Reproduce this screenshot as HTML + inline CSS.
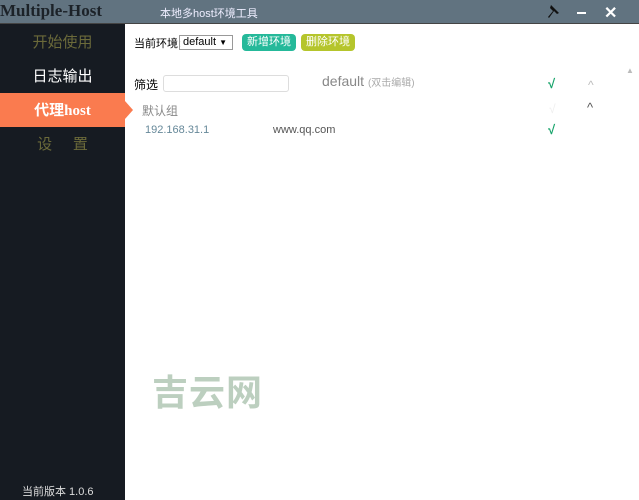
<!DOCTYPE html>
<html><head><meta charset="utf-8"><style>
*{margin:0;padding:0;box-sizing:border-box}
body{width:639px;height:500px;overflow:hidden;background:#fff;font-family:"Liberation Sans","Noto Sans CJK SC",sans-serif;position:relative}
.tb{position:absolute;left:0;top:0;width:639px;height:24px;background:#617380;border-bottom:1px solid #444}
.logo{position:absolute;left:0;top:1px;font-family:"Liberation Serif",serif;font-weight:bold;font-size:17px;color:#1c2228}
.title{position:absolute;left:160px;top:5px;font-size:11px;color:#eef}
.side{position:absolute;left:0;top:24px;width:125px;height:476px;background:#161b22}
.it{position:absolute;left:0;width:125px;text-align:center;font-size:15px}
.act{position:absolute;left:0;top:69px;width:125px;height:34px;background:#fa7b4f}
.arr{position:absolute;left:125px;top:101px;width:0;height:0;border-top:9px solid transparent;border-bottom:9px solid transparent;border-left:8px solid #fa7b4f}
.t{position:absolute;font-size:12px;white-space:nowrap}
.btn{position:absolute;top:34px;height:17px;border-radius:4px;color:#fff;font-size:11px;line-height:17px;padding:0 5px}
</style></head><body>
<div class="tb"><div class="logo">Multiple-Host</div><div class="title">本地多host环境工具</div>
<svg style="position:absolute;left:545px;top:3px" width="18" height="18" viewBox="0 0 18 18"><path d="M6 2l8 8-2 1-3-3-5 7-1-1 5-6-3-3z" fill="#111"/></svg>
<div style="position:absolute;left:577px;top:12px;width:9px;height:2px;background:#fff"></div>
<div style="position:absolute;left:604px;top:3px;color:#fff;font-size:16px;font-weight:bold">✕</div>
</div>
<div class="side">
<div class="it" style="top:7px;color:#6b6a3a">开始使用</div>
<div class="it" style="top:41px;color:#fff">日志输出</div>
<div class="act"></div>
<div class="it" style="top:75px;color:#fff;font-weight:bold">代理<span style="font-family:'Liberation Serif',serif">host</span></div>
<div class="it" style="top:109px;color:#6b6a3a">设&nbsp;&nbsp;&nbsp;&nbsp;&nbsp;置</div>
<div class="t" style="left:22px;top:459px;color:#ddd;font-size:11px">当前版本 1.0.6</div>
</div>
<div class="arr"></div>
<div class="t" style="left:134px;top:35px;color:#000;font-size:11px">当前环境:</div>
<div style="position:absolute;left:179px;top:35px;width:54px;height:15px;border:1px solid #999;font-size:11px;line-height:13px;padding-left:3px">default <span style="font-size:8px">▼</span></div>
<div class="btn" style="left:242px;background:#25b99a">新增环境</div>
<div class="btn" style="left:301px;background:#b5c52c">删除环境</div>
<div class="t" style="left:134px;top:76px;color:#000">筛选</div>
<div style="position:absolute;left:163px;top:75px;width:126px;height:17px;border:1px solid #ddd;border-radius:3px"></div>
<div class="t" style="left:322px;top:73px;font-size:14px;color:#888">default <span style="font-size:10px;color:#aaa">(双击编辑)</span></div>
<div class="t" style="left:548px;top:76px;color:#16a36a;font-weight:bold;font-size:13px">√</div>
<div class="t" style="left:588px;top:78px;color:#bbb">^</div>
<div class="t" style="left:626px;top:66px;color:#bbb;font-size:8px">▲</div>
<div class="t" style="left:142px;top:102px;color:#888">默认组</div>
<div class="t" style="left:549px;top:102px;color:#eee">√</div>
<div class="t" style="left:587px;top:100px;color:#555;font-size:13px">^</div>
<div class="t" style="left:145px;top:124px;color:#689;font-size:11px">192.168.31.1</div>
<div class="t" style="left:273px;top:124px;color:#555;font-size:11px">www.qq.com</div>
<div class="t" style="left:548px;top:122px;color:#16a36a;font-weight:bold;font-size:13px">√</div>
<div class="t" style="left:152px;top:364px;color:#bccfbf;font-size:36px;font-weight:bold;letter-spacing:1px">吉云网</div>
</body></html>
